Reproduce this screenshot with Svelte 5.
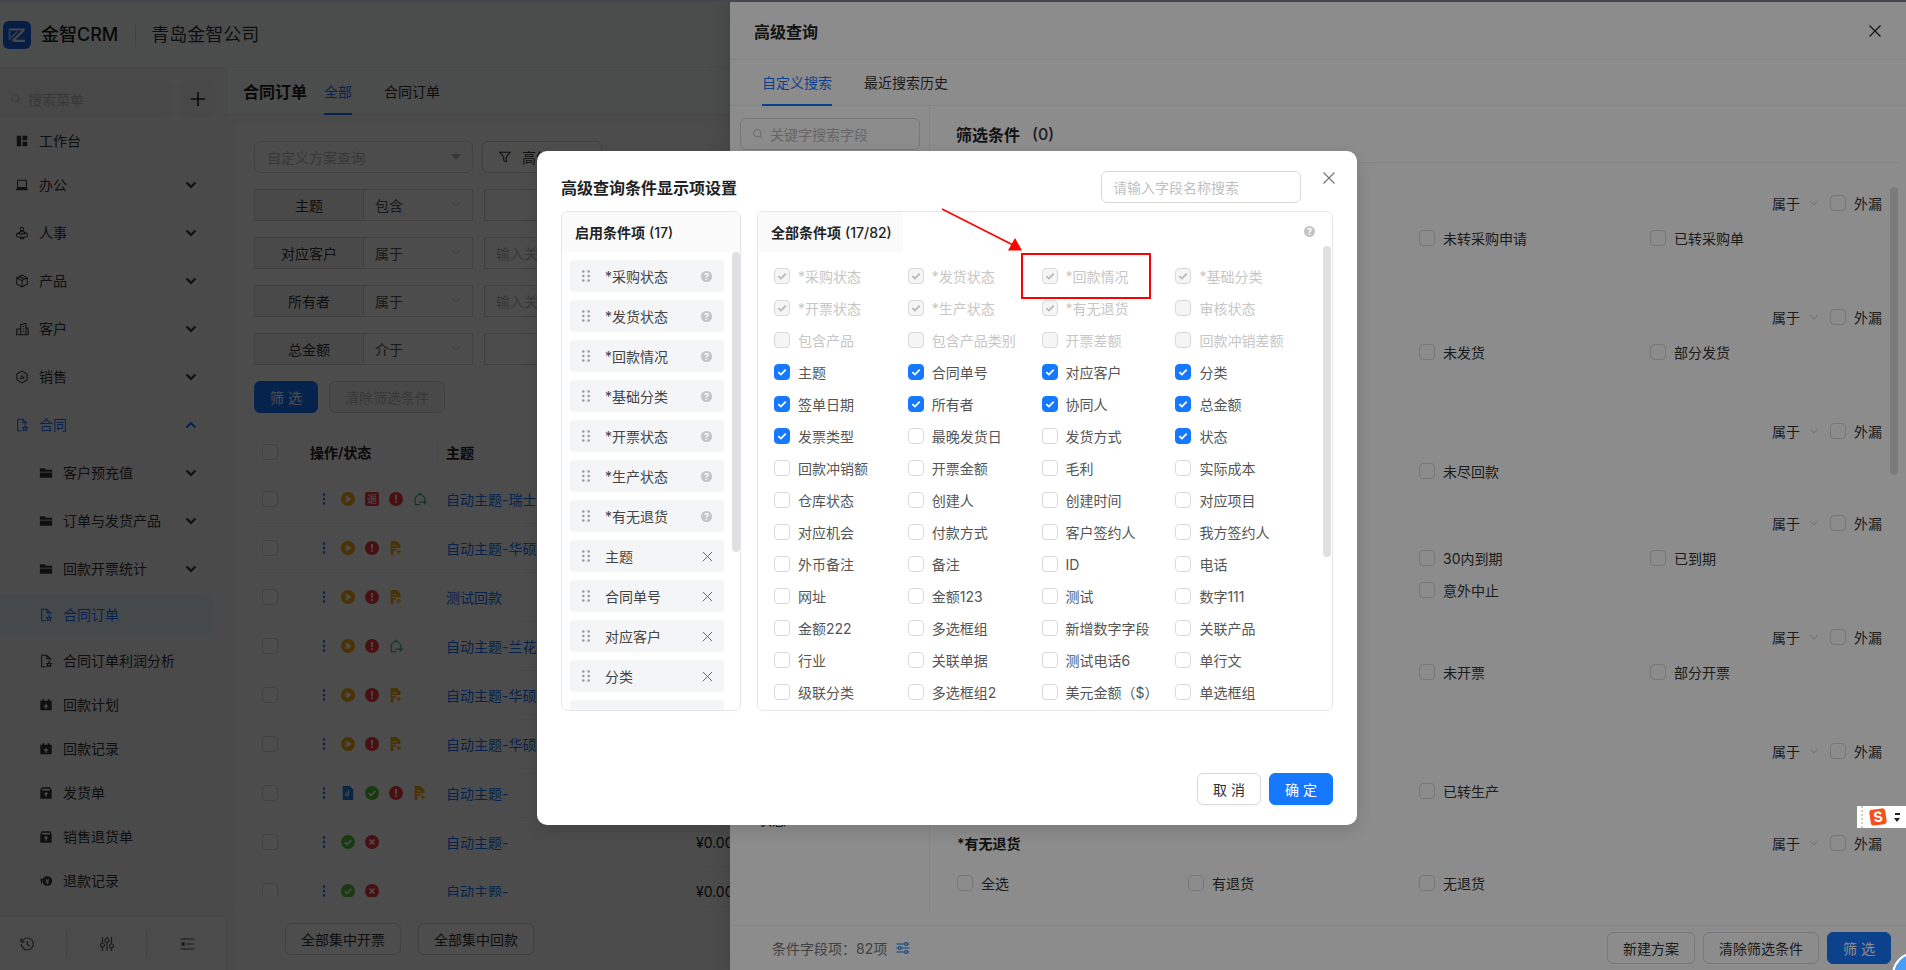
<script>
	const menu = [
		{ label: '工作台', icon: 'board' },
		{ label: '办公', icon: 'desk', chev: true },
		{ label: '人事', icon: 'person', chev: true },
		{ label: '产品', icon: 'cube', chev: true },
		{ label: '客户', icon: 'building', chev: true },
		{ label: '销售', icon: 'hex', chev: true },
		{ label: '合同', icon: 'docstar', chev: true, open: true },
		{ label: '客户预充值', icon: 'folder', chev: true, sub: true },
		{ label: '订单与发货产品', icon: 'folder', chev: true, sub: true },
		{ label: '回款开票统计', icon: 'folder', chev: true, sub: true },
		{ label: '合同订单', icon: 'docstar', sub: true, active: true },
		{ label: '合同订单利润分析', icon: 'docstar', sub: true },
		{ label: '回款计划', icon: 'calendar', sub: true },
		{ label: '回款记录', icon: 'calendar', sub: true },
		{ label: '发货单', icon: 'box', sub: true },
		{ label: '销售退货单', icon: 'box', sub: true },
		{ label: '退款记录', icon: 'refund', sub: true }
	];

	const filters = [
		{ label: '主题', op: '包含', hint: '' },
		{ label: '对应客户', op: '属于', hint: '输入关键字' },
		{ label: '所有者', op: '属于', hint: '输入关键字' },
		{ label: '总金额', op: '介于', hint: '' }
	];

	const rows = [
		{ title: '自动主题-瑞士手表', marks: ['play', 'ret', 'alert', 'share'] },
		{ title: '自动主题-华硕电脑', marks: ['play', 'alert', 'doc'] },
		{ title: '测试回款', marks: ['play', 'alert', 'doc'] },
		{ title: '自动主题-兰花', marks: ['play', 'alert', 'share'] },
		{ title: '自动主题-华硕电脑', marks: ['play', 'alert', 'doc'] },
		{ title: '自动主题-华硕电脑', marks: ['play', 'alert', 'doc'] },
		{ title: '自动主题-', marks: ['bdoc', 'ok', 'alert', 'doc'] },
		{ title: '自动主题-', marks: ['ok', 'no'], amount: '¥0.00' },
		{ title: '自动主题-', marks: ['ok', 'no'], amount: '¥0.00' }
	];

	const sections = [
		{ title: '*采购状态', h: 114, gap: 7, opts: ['全选', '', '未转采购申请', '已转采购单'] },
		{ title: '*发货状态', h: 114, gap: 7, opts: ['全选', '', '未发货', '部分发货'] },
		{ title: '*回款情况', h: 92, gap: 12, opts: ['全选', '', '未尽回款', ''] },
		{ title: '*基础分类', h: 114, gap: 7, opts: ['全选', '', '30内到期', '已到期', '', '', '意外中止', ''] },
		{ title: '*开票状态', h: 114, gap: 7, opts: ['全选', '', '未开票', '部分开票'] },
		{ title: '*生产状态', h: 92, gap: 12, opts: ['全选', '', '已转生产', ''] },
		{ title: '*有无退货', h: 80, gap: 12, opts: ['全选', '有退货', '无退货', ''] }
	];

	const locked = ['*采购状态', '*发货状态', '*回款情况', '*基础分类', '*开票状态', '*生产状态', '*有无退货'];
	const enabled = ['主题', '合同单号', '对应客户', '分类', '签单日期'];

	// state per cell: d = disabled + checked, x = disabled empty, c = checked, blank = empty
	const fields = [
		['*采购状态', 'd'], ['*发货状态', 'd'], ['*回款情况', 'd'], ['*基础分类', 'd'],
		['*开票状态', 'd'], ['*生产状态', 'd'], ['*有无退货', 'd'], ['审核状态', 'x'],
		['包含产品', 'x'], ['包含产品类别', 'x'], ['开票差额', 'x'], ['回款冲销差额', 'x'],
		['主题', 'c'], ['合同单号', 'c'], ['对应客户', 'c'], ['分类', 'c'],
		['签单日期', 'c'], ['所有者', 'c'], ['协同人', 'c'], ['总金额', 'c'],
		['发票类型', 'c'], ['最晚发货日', ''], ['发货方式', ''], ['状态', 'c'],
		['回款冲销额', ''], ['开票金额', ''], ['毛利', ''], ['实际成本', ''],
		['仓库状态', ''], ['创建人', ''], ['创建时间', ''], ['对应项目', ''],
		['对应机会', ''], ['付款方式', ''], ['客户签约人', ''], ['我方签约人', ''],
		['外币备注', ''], ['备注', ''], ['ID', ''], ['电话', ''],
		['网址', ''], ['金额123', ''], ['测试', ''], ['数字111', ''],
		['金额222', ''], ['多选框组', ''], ['新增数字字段', ''], ['关联产品', ''],
		['行业', ''], ['关联单据', ''], ['测试电话6', ''], ['单行文', ''],
		['级联分类', ''], ['多选框组2', ''], ['美元金额（$）', ''], ['单选框组', '']
	];

	const glyphs = {
		board: { fill: 'M2 2h5v12H2zM8.500 2H14v5.200H8.500zM8.500 8.800H14V14H8.500z' },
		desk: { line: 'M3 2.500h10v8.500H3zM3 11l-1.200 2.500h12.400L13 11', fill: 'M2.500 11h11v2.500h-11z' },
		person: { line: 'M8 1.500a2 2 0 1 0 0 4a2 2 0 1 0 0-4M5.500 6.500h5l.8 2.500H4.700zM4.700 7.500C2.800 8 1.500 9 1.500 10.200c0 1.600 3 2.800 6.500 2.800s6.500-1.200 6.500-2.800c0-1.200-1.300-2.200-3.200-2.700M6 13l.5 1.500h3L10 13' },
		cube: { line: 'M8 1.300l6 3v7.400l-6 3-6-3V4.300zM2 4.300l6 3 6-3M8 7.300v7.400M5 2.800l6 3' },
		building: { line: 'M2 14.500V8h4.500M6.500 14.500V3l6-1.500v13M12.500 7H15v7.500M1 14.500h14.500M9 5h1.500M9 8h1.500M9 11h1.500M4 11h.5' },
		hex: { line: 'M8 1.300l5.800 3.300v6.800L8 14.700l-5.800-3.300V4.600zM6 10.500V8.500M8 10.500v-5M10 10.500V7' },
		docstar: { line: 'M9 1.500H3v13h4.500M9 1.500l4 4v2M9 1.500v4h4M11.300 8.800l.9 1.900 2 .3-1.500 1.400.4 2-1.800-1-1.800 1 .4-2L8.900 11l2-.3z' },
		folder: { fill: 'M1 2.500h5.500L8 4.300h7V6.500H1zM1 7.500h14v6H1z' },
		calendar: { fill: 'M4 1.500h2V3h4V1.500h2V3h2.500v11h-13V3H4zM7.200 6.500v2.100H5.500v1.500h1.700v2.100h1.600v-2.100h1.700V8.600H8.800V6.500z' },
		box: { fill: 'M3 1.500h10l1.500 3.500v9.500h-13V5zM4 3l-.7 2h9.400L12 3zM8 6.500l-2.800 3h1.900v2.500h1.800V9.500h1.900z' },
		refund: { fill: 'M9.500 2.500a5.500 5.500 0 1 1 0 11a5.500 5.500 0 0 1 0-11zM8.200 5l1.300 2 1.300-2h1.100L10.400 7.500h1.100v1H10v.9h1.500v1H10V12H9v-1.600H7.500v-1H9v-.9H7.500v-1h1.100L7.100 5zM3 4.500L1 7.500l1.500.2-.3 1c-.2 1.300.4 2.500 1.300 3.300-.3-1.700.1-3 .9-4.100l1 .6z' },
		history: { line: 'M2.300 8a6 6 0 1 0 1.700-4.200L2 5.800M2 2.300v3.500h3.500M8.300 4.800v3.600l2.500 1.500' },
		sliders: { line: 'M3.500 1v6M3.500 11v4M8 1v1.500M8 6.500V15M12.500 1v7M12.500 12v3M3.500 7a2 2 0 1 0 0 4a2 2 0 1 0 0-4M8 2.500a2 2 0 1 0 0 4a2 2 0 1 0 0-4M12.500 8a2 2 0 1 0 0 4a2 2 0 1 0 0-4' },
		collapse: { line: 'M1.500 3H15M6.500 8H15M1.500 13H15', fill: 'M5.500 5v6L1.500 8z' },
		search: { line: 'M7 2a5 5 0 1 0 0 10a5 5 0 1 0 0-10M10.700 10.700l3.300 3.300' },
		funnel: { line: 'M2 2.500h12L9.500 8v5.500l-3-1.500V8z' },
		down: { line: 'M3 5.500l5 5 5-5' },
		tune: { line: 'M1.500 4h8M13 4h1.500M1.500 8h1.500M6.500 8h8M1.500 12h8M13 12h1.500M11.200 2.500a1.500 1.500 0 1 0 0 3a1.500 1.500 0 1 0 0-3M4.800 6.500a1.500 1.500 0 1 0 0 3a1.500 1.500 0 1 0 0-3M11.200 10.500a1.500 1.500 0 1 0 0 3a1.500 1.500 0 1 0 0-3' },
		close: { line: 'M2.500 2.500l11 11M13.500 2.500l-11 11' }
	};
</script>

{#snippet icon(name, cls = '')}
	<svg class="ico {cls}" viewBox="0 0 16 16" aria-hidden="true">
		{#if glyphs[name].fill}<path d={glyphs[name].fill} fill="currentColor" fill-rule="evenodd" />{/if}
		{#if glyphs[name].line}<path d={glyphs[name].line} fill="none" stroke="currentColor" stroke-width="1.200" />{/if}
	</svg>
{/snippet}

{#snippet box(state = '')}
	<span class="cb" class:on={state === 'c'} class:dis={state === 'd' || state === 'x'}>
		{#if state === 'c' || state === 'd'}
			<svg viewBox="0 0 16 16"><path d="M3.800 8.200l3 2.800 5.400-5.600" fill="none" stroke="currentColor" stroke-width="2" /></svg>
		{/if}
	</span>
{/snippet}

{#snippet grip()}
	<svg class="grip" viewBox="0 0 8 12">
		{#each [1.500, 6, 10.500] as y}
			<circle cx="1.300" cy={y} r="1.300" /><circle cx="6.700" cy={y} r="1.300" />
		{/each}
	</svg>
{/snippet}

{#snippet help()}
	<span class="help">?</span>
{/snippet}

{#snippet mark(kind)}
	{#if kind === 'play'}
		<svg class="mark" viewBox="0 0 16 16"><circle cx="8" cy="8" r="8" fill="#f5a70f" /><path d="M4.300 4.500h1v7h-1z" fill="#ffd27a" /><path d="M6.200 3.800L12.300 8l-6.100 4.200z" fill="#fff" /></svg>
	{:else if kind === 'ret'}
		<span class="mark ret">退</span>
	{:else if kind === 'alert'}
		<svg class="mark" viewBox="0 0 16 16"><circle cx="8" cy="8" r="8" fill="#f0383e" /><path d="M6.900 3.500h2.200l-.3 5.800H7.200zM7 10.500h2v2H7z" fill="#fff" /></svg>
	{:else if kind === 'share'}
		<svg class="mark" viewBox="0 0 16 16"><path d="M8 14.500H2.500V6.500L8 1.500l5.500 5v3M7 11.500h8M12.500 9l2.500 2.500-2.500 2.500" fill="none" stroke="#35b67a" stroke-width="1.300" /></svg>
	{:else if kind === 'doc'}
		<svg class="mark" viewBox="0 0 16 16"><path d="M2 0h7l4 4v4H8v3H5v5H2z" fill="#f5a70f" /><path d="M4 5.500h5M4 8.500h3" stroke="#fff" stroke-width="1.200" /><path d="M11 10v5M8.500 12.500h5" stroke="#f5a70f" stroke-width="1.300" /></svg>
	{:else if kind === 'bdoc'}
		<svg class="mark" viewBox="0 0 16 16"><path d="M2 0h8l4 4v12H2z" fill="#1d83ea" /><path d="M8.500 4.500v5a1.500 1.500 0 1 1-1-1.400" fill="none" stroke="#fff" stroke-width="1.200" /></svg>
	{:else if kind === 'ok'}
		<svg class="mark" viewBox="0 0 16 16"><circle cx="8" cy="8" r="8" fill="#55c43a" /><path d="M4.300 8.200l2.700 2.600 4.700-5" fill="none" stroke="#fff" stroke-width="1.800" /></svg>
	{:else if kind === 'no'}
		<svg class="mark" viewBox="0 0 16 16"><circle cx="8" cy="8" r="8" fill="#f0383e" /><path d="M5.200 5.200l5.600 5.600M10.800 5.200l-5.600 5.600" stroke="#fff" stroke-width="1.800" /></svg>
	{/if}
{/snippet}

<div class="topline"></div>
<div class="page">
	<header class="appbar">
		<div class="logo">
			<svg viewBox="0 0 28 28">
				<rect width="28" height="28" rx="6" fill="#1667e8" />
				<path d="M6.500 8.500h15M21 9L9.500 20M11 19.800h11" fill="none" stroke="#e8f1ff" stroke-width="2.200" />
				<path d="M6.500 8v10l8-7.500" fill="none" stroke="#a9cbff" stroke-width="1.600" />
			</svg>
		</div>
		<span class="brand">金智CRM</span>
		<i class="brand-sep"></i>
		<span class="company">青岛金智公司</span>
	</header>

	<div class="layout">
		<nav class="sidebar">
			<div class="side-search">
				<div class="menu-search">{@render icon('search', 'i12')}<span>搜索菜单</span></div>
				<button class="plus" aria-label="新建">
					<svg viewBox="0 0 14 14"><path d="M7 0v14M0 7h14" stroke="currentColor" stroke-width="1.600" /></svg>
				</button>
			</div>
			<ul class="menu">
				{#each menu as item}
					<li class="item" class:sub={item.sub} class:active={item.active} class:open={item.open} class:group={item.chev}>
						<div class="item-in">
							{@render icon(item.icon)}
							<span class="item-label">{item.label}</span>
							{#if item.chev}
								<svg class="chev" viewBox="0 0 12 12"><path d={item.open ? 'M1.500 8.500L6 4l4.500 4.500' : 'M1.500 3.500L6 8l4.500-4.500'} fill="none" stroke="currentColor" stroke-width="2.200" /></svg>
							{/if}
						</div>
					</li>
				{/each}
			</ul>
			<div class="side-foot">
				<span>{@render icon('history', 'i16')}</span>
				<span>{@render icon('sliders', 'i16')}</span>
				<span>{@render icon('collapse', 'i16')}</span>
			</div>
		</nav>

		<main class="main">
			<div class="page-tabs">
				<strong>合同订单</strong>
				<span class="ptab on">全部</span>
				<span class="ptab">合同订单</span>
			</div>
			<section class="card">
				<div class="scheme-row">
					<div class="scheme">自定义方案查询<i class="tri"></i></div>
					<button class="adv">{@render icon('funnel', 'i14')}高级查询</button>
				</div>
				{#each filters as f}
					<div class="filter">
						<span class="f-label">{f.label}</span>
						<span class="f-op">{f.op}{@render icon('down', 'i12 soft')}</span>
						<span class="f-val">{f.hint}</span>
					</div>
				{/each}
				<div class="actions">
					<button class="btn primary">筛 选</button>
					<button class="btn ghost">清除筛选条件</button>
				</div>
				<div class="t-head">
					<span>{@render box()}</span>
					<b>操作/状态</b>
					<b class="th-sub">主题</b>
				</div>
				<div class="t-body">
					{#each rows as r}
						<div class="t-row">
							<span>{@render box()}</span>
							<span class="marks">
								<svg class="mark dots" viewBox="0 0 16 16"><rect x="6.800" y="1.500" width="2.400" height="2.800" /><rect x="6.800" y="6.600" width="2.400" height="2.800" /><rect x="6.800" y="11.700" width="2.400" height="2.800" /></svg>
								{#each r.marks as m}{@render mark(m)}{/each}
							</span>
							<a class="subject" href="#top">{r.title}</a>
							<span class="amount">{r.amount ?? ''}</span>
						</div>
					{/each}
				</div>
				<div class="t-foot">
					<button class="btn">全部集中开票</button>
					<button class="btn">全部集中回款</button>
				</div>
			</section>
		</main>
	</div>

	<div class="mask"></div>

	<aside class="drawer">
		<div class="dr-head">
			<strong>高级查询</strong>
			{@render icon('close', 'i16 dr-close')}
		</div>
		<div class="dr-tabs">
			<span class="dtab on">自定义搜索</span>
			<span class="dtab">最近搜索历史</span>
		</div>
		<div class="dr-body">
			<div class="dr-left">
				<div class="kw">{@render icon('search', 'i12')}<span>关键字搜索字段</span></div>
				<div class="field-name">状态</div>
			</div>
			<div class="dr-right">
				<div class="cond-title"><strong>筛选条件</strong><span>(0)</span></div>
				<div class="cond-list">
					{#each sections as s}
						<div class="cond" style="height:{s.h}px">
							<div class="cond-head">
								<b>{s.title}</b>
								<span class="cond-ops">
									属于{@render icon('down', 'i12 soft')}
									{@render box()}
									<span>外漏</span>
								</span>
							</div>
							<div class="opts" style="margin-top:{s.gap}px">
								{#each s.opts as o}
									<span class="opt">{#if o}{@render box()}{o}{/if}</span>
								{/each}
							</div>
						</div>
					{/each}
					<i class="cond-thumb"></i>
				</div>
			</div>
		</div>
		<div class="dr-foot">
			<span class="count">条件字段项：82项{@render icon('tune', 'i16 blue')}</span>
			<span class="dr-btns">
				<button class="btn">新建方案</button>
				<button class="btn">清除筛选条件</button>
				<button class="btn primary">筛 选</button>
			</span>
		</div>
	</aside>

	<div class="mask"></div>

	<div class="dialog">
		<div class="dlg-head">
			<strong>高级查询条件显示项设置</strong>
			<input class="dlg-search" placeholder="请输入字段名称搜索" />
		</div>
		<div class="dlg-panels">
			<section class="panel left">
				<div class="panel-head"><b>启用条件项</b> (17)</div>
				<div class="en-list">
					{#each locked as name}
						<div class="en">{@render grip()}<span>{name}</span>{@render help()}</div>
					{/each}
					{#each enabled as name}
						<div class="en">{@render grip()}<span>{name}</span>{@render icon('close', 'en-x')}</div>
					{/each}
				</div>
				<i class="thumb l"></i>
			</section>
			<section class="panel right">
				<div class="panel-tab"><b>全部条件项</b> (17/82)</div>
				<span class="panel-help">{@render help()}</span>
				<div class="field-grid">
					{#each fields as [name, st]}
						<label class="field" class:off={st === 'd' || st === 'x'}>{@render box(st)}<span>{name}</span></label>
					{/each}
				</div>
				<i class="thumb r"></i>
			</section>
		</div>
		<div class="dlg-foot">
			<button class="btn tall">取 消</button>
			<button class="btn tall ok">确 定</button>
		</div>
		{@render icon('close', 'dlg-close')}
		<svg class="notes" viewBox="0 0 820 674">
			<path d="M405 58L476 94" stroke="#f00" stroke-width="1.600" fill="none" />
			<path d="M478 87L471 99.500L485 99.500z" fill="#f00" />
			<rect x="485" y="103" width="128" height="44" fill="none" stroke="#f00" stroke-width="2" />
		</svg>
	</div>

	<div class="ime">
		<i class="ime-grip"></i>
		<span class="ime-s">S</span>
		<span class="ime-menu"><i></i><b></b></span>
	</div>
	<i class="bubble"></i>
</div>

<style>
	:global(body) {
		margin: 0;
		background: #4d4d4d;
	}

	:global(#app) {
		font-family: Inter, 'Noto Sans CJK SC', sans-serif;
		font-size: 14px;
		color: #333;
	}

	* {
		box-sizing: border-box;
	}

	button,
	input {
		font: inherit;
	}

	ul {
		list-style: none;
		margin: 0;
		padding: 0;
	}

	.topline {
		height: 2px;
		background: #44474d;
	}

	.page {
		position: relative;
		width: 1906px;
		height: 968px;
		overflow: hidden;
		background: #f7f8fa;
	}

	.mask {
		position: absolute;
		inset: 0;
		background: rgba(0, 0, 0, 0.45);
	}

	.ico {
		width: 14px;
		height: 14px;
		flex: none;
	}

	.ico.i12 {
		width: 12px;
		height: 12px;
	}

	.ico.i16 {
		width: 16px;
		height: 16px;
	}

	.ico.soft {
		color: #bbb;
	}

	.ico.blue {
		color: #1677ff;
	}

	/* app bar */
	.appbar {
		display: flex;
		align-items: center;
		height: 66px;
		padding-left: 3px;
		background: #fafbfc;
		border-bottom: 1px solid #eee;
	}

	.logo {
		width: 28px;
		height: 28px;
	}

	.logo svg {
		display: block;
	}

	.brand {
		margin-left: 10px;
		font-size: 18px;
		font-weight: 500;
		line-height: 24px;
		color: #222;
	}

	.brand-sep {
		width: 1px;
		height: 20px;
		margin: 0 15px 0 17px;
		background: #ddd;
	}

	.company {
		font-size: 18px;
		line-height: 24px;
		color: #333;
	}

	.layout {
		display: flex;
		height: 902px;
	}

	/* sidebar */
	.sidebar {
		display: flex;
		flex-direction: column;
		flex: none;
		width: 227px;
		border-right: 1px solid #eceef1;
		background: #f7f8fa;
	}

	.side-search {
		display: flex;
		gap: 8px;
		height: 51px;
		padding-top: 13px;
	}

	.menu-search {
		display: flex;
		align-items: center;
		gap: 6px;
		width: 172px;
		height: 36px;
		padding-left: 10px;
		border-radius: 0 6px 6px 0;
		background: #f0f1f3;
		color: #bbb;
	}

	.plus {
		display: flex;
		align-items: center;
		justify-content: center;
		width: 36px;
		height: 36px;
		padding: 0;
		border: 0;
		border-radius: 6px;
		background: #f0f1f3;
		color: #222;
	}

	.plus svg {
		width: 14px;
		height: 14px;
	}

	.menu {
		flex: 1;
		color: #333;
	}

	.item {
		height: 44px;
	}

	.item.group {
		margin-bottom: 4px;
	}

	.item-in {
		display: flex;
		align-items: center;
		height: 44px;
		padding-left: 15px;
	}

	.item-label {
		margin-left: 10px;
		line-height: 20px;
	}

	.item.sub .item-in {
		padding-left: 39px;
	}

	.chev {
		width: 12px;
		height: 12px;
		margin-left: auto;
		margin-right: 29px;
		color: #333;
	}

	.item.open .item-in,
	.item.open .chev,
	.item.active .item-in {
		color: #1677ff;
	}

	.item.active .item-in {
		height: 40px;
		margin: 2px 12px 0 0;
		border-radius: 0 12px 12px 0;
		background: #e6f2fb;
	}

	.side-foot {
		display: flex;
		align-items: center;
		height: 54px;
		border-top: 1px solid #eceef1;
		background: #fafafa;
		color: #555;
	}

	.side-foot span {
		display: flex;
		flex: none;
		justify-content: center;
		align-items: center;
		width: 80px;
		height: 28px;
	}

	.side-foot span:nth-child(1) {
		width: 66px;
		padding-right: 12px;
	}

	.side-foot span + span {
		border-left: 1px solid #ddd;
	}

	/* main */
	.main {
		flex: 1;
		min-width: 0;
		background: #f7f8fa;
	}

	.page-tabs {
		display: flex;
		align-items: center;
		height: 47px;
		padding-left: 16px;
		border-bottom: 1px solid #eceef1;
		background: #fafbfc;
	}

	.page-tabs strong {
		font-size: 16px;
		font-weight: 600;
		color: #222;
		margin-right: 17px;
	}

	.ptab {
		display: flex;
		align-items: center;
		height: 47px;
		margin-right: 32px;
		border-bottom: 2px solid transparent;
		padding-top: 2px;
	}

	.ptab.on {
		color: #1677ff;
		border-color: #1677ff;
	}

	.card {
		width: 900px;
		margin: 10px 0 0 7px;
		padding: 16px 0 0 20px;
		height: 845px;
		background: #fbfbfb;
	}

	.scheme-row {
		display: flex;
		gap: 9px;
		height: 32px;
		margin-bottom: 16px;
	}

	.scheme {
		display: flex;
		align-items: center;
		justify-content: space-between;
		width: 219px;
		padding: 0 11px 0 12px;
		border: 1px solid #d9d9d9;
		border-radius: 6px;
		color: #bbb;
	}

	.tri {
		width: 0;
		height: 0;
		border-left: 5px solid transparent;
		border-right: 5px solid transparent;
		border-top: 6px solid #bbb;
	}

	.adv {
		display: flex;
		align-items: center;
		gap: 10px;
		width: 120px;
		padding: 0 0 0 15px;
		border: 1px solid #d9d9d9;
		border-radius: 6px;
		background: #fff;
		color: #333;
	}

	.filter {
		display: flex;
		height: 32px;
		margin-bottom: 16px;
	}

	.f-label {
		display: flex;
		align-items: center;
		justify-content: center;
		width: 110px;
		border: 1px solid #d9d9d9;
		background: #f5f5f5;
	}

	.f-op {
		display: flex;
		align-items: center;
		justify-content: space-between;
		width: 109px;
		padding: 0 10px 0 11px;
		border: 1px solid #d9d9d9;
		border-left: 0;
		color: #555;
	}

	.f-val {
		display: flex;
		align-items: center;
		width: 240px;
		margin-left: 11px;
		padding-left: 11px;
		border: 1px solid #d9d9d9;
		color: #bbb;
	}

	.actions {
		display: flex;
		gap: 11px;
		height: 32px;
	}

	.btn {
		height: 32px;
		padding: 0 15px;
		border: 1px solid #d9d9d9;
		border-radius: 6px;
		background: #fff;
		color: #333;
		white-space: nowrap;
	}

	.btn.primary {
		width: 64px;
		padding: 0;
		border-color: #1677ff;
		background: #1677ff;
		color: #fff;
	}

	.btn.ghost {
		color: #bbb;
		background: #f5f5f5;
	}

	.t-head {
		display: grid;
		grid-template-columns: 48px 136px 200px;
		align-items: center;
		height: 47px;
		margin-top: 15px;
		padding-left: 8px;
	}

	.t-head b {
		font-weight: 600;
		color: #222;
	}

	.th-sub {
		position: relative;
	}

	.th-sub::before {
		content: '';
		position: absolute;
		left: -9px;
		top: 0;
		height: 20px;
		width: 1px;
		background: #eee;
	}

	.t-body {
		height: 422px;
		overflow: hidden;
	}

	.t-row {
		display: grid;
		grid-template-columns: 48px 136px 250px 80px;
		align-items: center;
		height: 49px;
		margin-left: -20px;
		padding-left: 28px;
		border-bottom: 1px solid #eee;
	}

	.marks {
		display: flex;
		align-items: center;
		gap: 10px;
		padding-left: 7px;
	}

	.mark {
		display: block;
		flex: none;
		width: 14px;
		height: 14px;
	}

	.dots {
		fill: #1677ff;
	}

	.ret {
		border-radius: 2px;
		background: #f0383e;
		color: #fff;
		font-size: 10px;
		line-height: 14px;
		text-align: center;
	}

	.subject {
		color: #1677ff;
		text-decoration: none;
		white-space: nowrap;
	}

	.amount {
		color: #222;
	}

	.t-foot {
		display: flex;
		gap: 17px;
		margin-top: 9px;
		padding: 16px 0 0 51px;
		margin-left: -20px;
		border-top: 1px solid #eee;
	}

	.t-foot .btn {
		width: 116px;
		padding: 0;
	}

	/* drawer */
	.drawer {
		position: absolute;
		top: 0;
		left: 730px;
		right: 0;
		bottom: 0;
		display: flex;
		flex-direction: column;
		background: #fff;
		box-shadow: -6px 0 16px rgba(0, 0, 0, 0.1);
	}

	.dr-head {
		display: flex;
		align-items: center;
		justify-content: space-between;
		flex: none;
		height: 58px;
		padding: 0 23px 0 24px;
		border-bottom: 1px solid #f0f0f0;
	}

	.dr-head strong {
		font-size: 16px;
		font-weight: 600;
		color: #222;
	}

	.dr-head :global(.dr-close) {
		color: #222;
	}

	.dr-tabs {
		display: flex;
		gap: 32px;
		flex: none;
		height: 46px;
		padding-left: 32px;
		border-bottom: 1px solid #f0f0f0;
	}

	.dtab {
		display: flex;
		align-items: center;
		height: 46px;
		border-bottom: 2px solid transparent;
		color: #333;
	}

	.dtab.on {
		color: #1677ff;
		border-color: #1677ff;
	}

	.dr-body {
		display: flex;
		flex: 1;
		min-height: 0;
		padding-bottom: 13px;
	}

	.dr-left {
		flex: none;
		width: 200px;
		padding: 12px 0 0 10px;
		border-right: 1px solid #f0f0f0;
	}

	.kw {
		display: flex;
		align-items: center;
		gap: 6px;
		width: 180px;
		height: 32px;
		padding-left: 11px;
		border: 1px solid #d9d9d9;
		border-radius: 6px;
		color: #bbb;
	}

	.field-name {
		margin: 660px 0 0 18px;
		line-height: 20px;
		color: #333;
	}

	.dr-right {
		flex: 1;
		min-width: 0;
		display: flex;
		flex-direction: column;
	}

	.cond-title {
		display: flex;
		align-items: center;
		gap: 12px;
		flex: none;
		height: 57px;
		margin-right: 8px;
		padding-left: 26px;
		border-bottom: 1px solid #f0f0f0;
	}

	.cond-title strong {
		font-size: 16px;
		font-weight: 600;
		color: #222;
	}

	.cond-title span {
		font-size: 16px;
		font-weight: 500;
		color: #333;
	}

	.cond-list {
		position: relative;
		flex: 1;
		padding: 28px 24px 0 27px;
		overflow: hidden;
	}

	.cond {
		overflow: hidden;
	}

	.cond-head {
		display: flex;
		align-items: center;
		justify-content: space-between;
		height: 24px;
	}

	.cond-head b {
		font-weight: 600;
		color: #222;
	}

	.cond-ops {
		display: flex;
		align-items: center;
		color: #333;
	}

	.cond-ops :global(.ico) {
		margin: 0 10px 0 8px;
	}

	.cond-ops span:last-child {
		margin-left: 8px;
	}

	.opts {
		display: grid;
		grid-template-columns: repeat(4, 231px);
		grid-auto-rows: 32px;
	}

	.opt {
		display: flex;
		align-items: center;
		gap: 8px;
		color: #333;
	}

	.cond-thumb {
		position: absolute;
		top: 24px;
		right: 8px;
		width: 8px;
		height: 288px;
		border-radius: 4px;
		background: #e0e0e0;
	}

	.dr-foot {
		display: flex;
		align-items: center;
		justify-content: space-between;
		flex: none;
		height: 45px;
		padding: 0 15px 0 42px;
		border-top: 1px solid #f0f0f0;
	}

	.count {
		display: flex;
		align-items: center;
		gap: 8px;
		color: #777;
	}

	.dr-btns {
		display: flex;
		gap: 8px;
	}

	.dr-btns .btn:nth-child(1) {
		width: 88px;
		padding: 0;
	}

	.dr-btns .btn:nth-child(2) {
		width: 116px;
		padding: 0;
	}

	/* checkbox */
	.cb {
		display: block;
		flex: none;
		width: 16px;
		height: 16px;
		border: 1px solid #d9d9d9;
		border-radius: 4px;
		background: #fff;
	}

	.cb svg {
		display: block;
		width: 14px;
		height: 14px;
	}

	.cb.on {
		border-color: #1677ff;
		background: #1677ff;
		color: #fff;
	}

	.cb.dis {
		background: #f5f5f5;
		color: #b8b8b8;
	}

	/* dialog */
	.dialog {
		position: absolute;
		left: 537px;
		top: 149px;
		display: flex;
		flex-direction: column;
		width: 820px;
		height: 674px;
		padding: 0 24px;
		border-radius: 10px;
		background: #fff;
		box-shadow: 0 6px 16px rgba(0, 0, 0, 0.12);
	}

	.dlg-head {
		display: flex;
		align-items: center;
		justify-content: space-between;
		flex: none;
		height: 60px;
		padding: 12px 32px 0 0;
	}

	.dlg-head strong {
		font-size: 16px;
		font-weight: 600;
		color: #222;
	}

	.dlg-search {
		width: 200px;
		height: 32px;
		padding: 0 11px;
		border: 1px solid #d9d9d9;
		border-radius: 6px;
		outline: none;
		color: #333;
	}

	.dlg-search::placeholder {
		color: #bfbfbf;
	}

	.dialog > :global(.dlg-close) {
		position: absolute;
		top: 19px;
		right: 20px;
		width: 16px;
		height: 16px;
		color: #777;
	}

	.dlg-panels {
		display: flex;
		gap: 16px;
		flex: none;
		height: 500px;
	}

	.panel {
		position: relative;
		border: 1px solid #e4e8ee;
		border-radius: 6px;
		overflow: hidden;
	}

	.panel.left {
		flex: none;
		width: 180px;
	}

	.panel.right {
		flex: 1;
	}

	.panel b {
		font-weight: 600;
		color: #222;
	}

	.panel-head,
	.panel-tab {
		display: flex;
		align-items: center;
		gap: 4px;
		height: 40px;
		padding-left: 13px;
		background: #fafafa;
		font-weight: 500;
		color: #222;
	}

	.panel-tab {
		width: 145px;
	}

	.panel-help {
		position: absolute;
		top: 14px;
		right: 17px;
		display: flex;
	}

	.en-list {
		display: flex;
		flex-direction: column;
		gap: 8px;
		padding: 8px 0 0 8px;
	}

	.en {
		display: flex;
		align-items: center;
		flex: none;
		width: 154px;
		height: 32px;
		padding: 0 12px;
		border-radius: 4px;
		background: #f4f5f7;
		color: #444;
	}

	.en span:nth-of-type(1) {
		flex: 1;
		margin-left: 15px;
	}

	.grip {
		flex: none;
		width: 8px;
		height: 12px;
		fill: #9a9a9a;
	}

	.help {
		display: block;
		flex: none;
		width: 11px;
		height: 11px;
		border-radius: 50%;
		background: #c4c4c4;
		color: #fff;
		font-size: 9px;
		font-weight: 700;
		line-height: 11px;
		text-align: center;
	}

	.en :global(.en-x) {
		width: 13px;
		height: 13px;
		color: #666;
		margin-right: -2px;
	}

	.field-grid {
		display: grid;
		grid-template-columns: repeat(4, 133.8px);
		grid-auto-rows: 32px;
		padding: 8px 0 0 16px;
	}

	.field {
		display: flex;
		align-items: center;
		gap: 8px;
		color: #555;
		white-space: nowrap;
	}

	.field.off {
		color: #c6c6c6;
	}

	.thumb {
		position: absolute;
		width: 8px;
		border-radius: 4px;
		background: #e0e0e0;
	}

	.thumb.l {
		left: 170px;
		top: 40px;
		height: 300px;
	}

	.thumb.r {
		right: 1px;
		top: 34px;
		height: 311px;
	}

	.dlg-foot {
		display: flex;
		justify-content: flex-end;
		gap: 8px;
		margin-top: 62px;
	}

	.btn.tall {
		width: 64px;
		padding: 0;
		box-shadow: 0 2px 0 rgba(0, 0, 0, 0.02);
	}

	.btn.ok {
		border-color: #1677ff;
		background: #1677ff;
		color: #fff;
	}

	.notes {
		position: absolute;
		inset: 0;
		width: 820px;
		height: 674px;
		pointer-events: none;
	}

	/* floating input method bar */
	.ime {
		position: absolute;
		right: 0;
		top: 804px;
		display: flex;
		align-items: center;
		width: 49px;
		height: 22px;
		padding-left: 4px;
		background: #fff;
	}

	.ime-grip {
		width: 2px;
		height: 22px;
		border-left: 2px dotted #ccc;
	}

	.ime-s {
		width: 16px;
		height: 16px;
		margin-left: 7px;
		border-radius: 3px;
		background: #f4511e;
		color: #fff;
		font-size: 14px;
		font-weight: 700;
		line-height: 16px;
		text-align: center;
		transform: rotate(-8deg);
	}

	.ime-menu {
		display: flex;
		flex-direction: column;
		align-items: center;
		gap: 3px;
		margin-left: 8px;
	}

	.ime-menu i {
		width: 5px;
		height: 2px;
		background: #222;
	}

	.ime-menu b {
		width: 0;
		height: 0;
		border-left: 3px solid transparent;
		border-right: 3px solid transparent;
		border-top: 4px solid #222;
	}

	.bubble {
		position: absolute;
		left: 1892px;
		top: 950px;
		width: 46px;
		height: 46px;
		border: 2px solid #fff;
		border-radius: 50%;
		background: #4a9df5;
	}
</style>
